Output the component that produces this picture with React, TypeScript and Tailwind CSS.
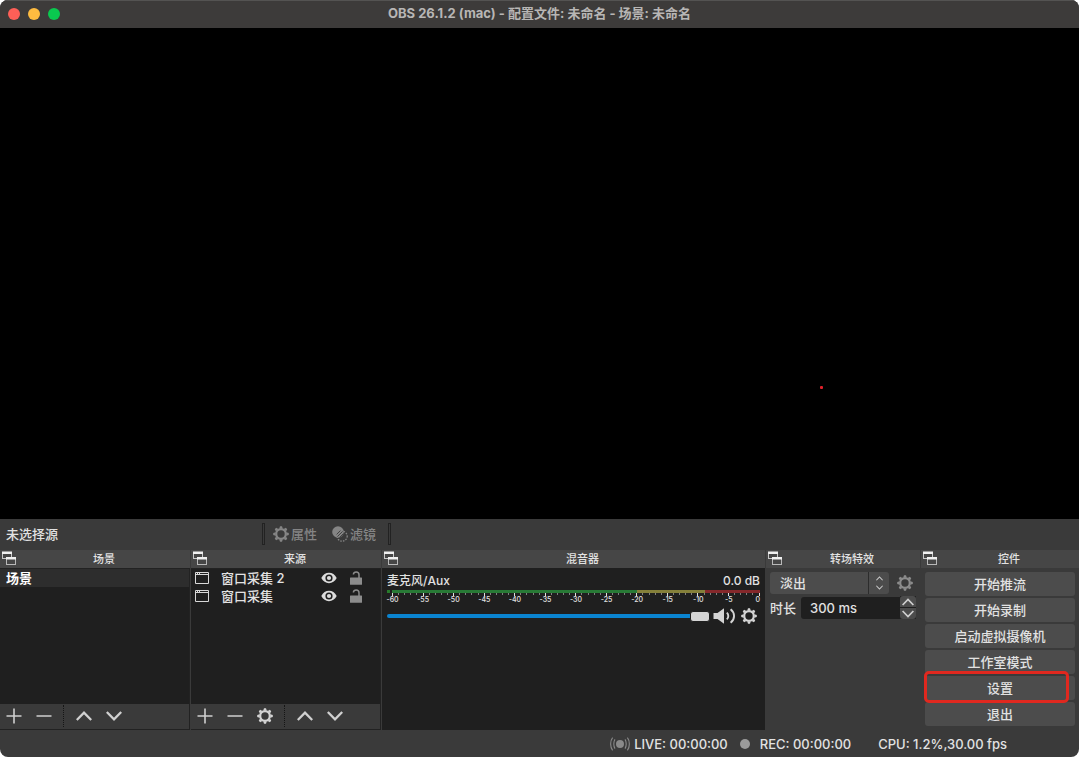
import { useState } from "react";
import type { ReactNode } from "react";
import clsx from "clsx";

const GEAR_ANGLES = [0, 45, 90, 135, 180, 225, 270, 315];

function GearIcon({ className }: { className?: string }) {
  return (
    <svg viewBox="0 0 16 16" className={clsx("size-4 shrink-0", className)} aria-hidden="true">
      <circle cx="8" cy="8" r="4.8" fill="none" stroke="currentColor" strokeWidth="2.2" />
      {GEAR_ANGLES.map((angle) => (
        <path key={angle} d="M6.3 2.6 L7 0.2 H9 L9.7 2.6 Z" fill="currentColor" transform={`rotate(${angle} 8 8)`} />
      ))}
    </svg>
  );
}

function FiltersIcon() {
  return (
    <svg viewBox="0 0 16 16" className="size-4 shrink-0" aria-hidden="true">
      <circle cx="10.2" cy="10.2" r="5" fill="none" stroke="currentColor" strokeWidth="1.3" strokeDasharray="1.5 1.2" />
      <circle cx="6" cy="6" r="5.8" fill="currentColor" />
      <path d="M4.6 8.4 L8.4 4.6 M5.4 10.6 L10.6 5.4 M7.6 11.4 L11.4 7.6" stroke="#3a3a3a" strokeWidth="0.9" />
    </svg>
  );
}

function FloatIcon() {
  return (
    <svg viewBox="0 0 16 16" className="size-4" aria-hidden="true">
      <rect x="0.5" y="1.5" width="9" height="6" fill="#464646" stroke="#c8c8c8" />
      <path d="M0 0.5 H10 V3 H0 Z" fill="#f0f0f0" />
      <rect x="4.5" y="7.5" width="9" height="6" fill="#464646" stroke="#b8b8b8" />
      <path d="M4 6 H14 V8.5 H4 Z" fill="#f0f0f0" />
    </svg>
  );
}

function WindowIcon() {
  return (
    <svg viewBox="0 0 14 12" className="h-3 w-3.5 shrink-0" aria-hidden="true">
      <path d="M0.5 0.5 H13.5 V11.5 H0.5 Z M0.5 2.5 H13.5" fill="none" stroke="#d8d8d8" />
      <path d="M2 1.5 H5" stroke="#d8d8d8" strokeDasharray="1 1" />
    </svg>
  );
}

function EyeIcon() {
  return (
    <svg viewBox="0 0 16 12" className="h-3 w-4" aria-hidden="true">
      <path
        fillRule="evenodd"
        fill="#dcdcdc"
        d="M0.3 6 C2 2.6 4.8 0.8 8 0.8 S14 2.6 15.7 6 C14 9.4 11.2 11.2 8 11.2 S2 9.4 0.3 6 Z M8 2.4 A3.6 3.6 0 1 0 8 9.6 A3.6 3.6 0 1 0 8 2.4 Z"
      />
      <circle cx="8" cy="6" r="2.1" fill="#dcdcdc" />
    </svg>
  );
}

function UnlockIcon() {
  return (
    <svg viewBox="0 0 12 14" className="h-3.5 w-3" aria-hidden="true">
      <path d="M3.4 3.6 C3.4 1.6 4.6 0.9 6.2 0.9 C8 0.9 9 2 9 3.8 V7" fill="none" stroke="#8c8c8c" strokeWidth="1.5" />
      <rect x="0" y="6.5" width="12" height="7.3" rx="0.5" fill="#8c8c8c" />
    </svg>
  );
}

function SpeakerIcon() {
  return (
    <svg viewBox="0 0 23 16" className="h-4 w-[23px]" aria-hidden="true">
      <path d="M0.5 5 H4.5 L11 0.2 V15.8 L4.5 11 H0.5 Z" fill="#d4d4d4" />
      <path d="M13.8 4.6 C15.8 6.4 15.8 9.6 13.8 11.4 M17.6 1.2 C22.2 4.8 22.2 11.2 17.6 14.8" fill="none" stroke="#d4d4d4" strokeWidth="1.9" />
    </svg>
  );
}

function LiveIcon() {
  return (
    <svg viewBox="0 0 20 14" className="h-3.5 w-5" aria-hidden="true">
      <circle cx="10" cy="7" r="4" fill="#8a8a8a" />
      <path
        d="M5 2.4 C3.4 4.6 3.4 9.4 5 11.6 M2.6 0.6 C0 3.8 0 10.2 2.6 13.4 M15 2.4 C16.6 4.6 16.6 9.4 15 11.6 M17.4 0.6 C20 3.8 20 10.2 17.4 13.4"
        fill="none"
        stroke="#8a8a8a"
        strokeWidth="1.1"
      />
    </svg>
  );
}

const GLYPHS = {
  plus: "M0.5 8 H15.5 M8 0.5 V15.5",
  minus: "M0.5 8 H15.5",
  up: "M0.8 12 L8 4.6 L15.2 12",
  down: "M0.8 4 L8 11.4 L15.2 4",
};

function Glyph({ name, className = "size-4" }: { name: keyof typeof GLYPHS; className?: string }) {
  const bold = name === "up" || name === "down";
  return (
    <svg viewBox="0 0 16 16" className={className} aria-hidden="true">
      <path d={GLYPHS[name]} fill="none" stroke="#d0d0d0" strokeWidth={bold ? 2.3 : 1.6} />
    </svg>
  );
}

function ToolButton({ label, children }: { label: string; children: ReactNode }) {
  return (
    <button type="button" aria-label={label} className="flex h-6 w-7 items-center justify-center text-[#d4d4d4]">
      {children}
    </button>
  );
}

function ListToolbar({ withSettings }: { withSettings?: boolean }) {
  return (
    <div className="flex h-[25px] items-center gap-0.5 bg-[#3a3a3a] pb-px">
      <ToolButton label="添加"><Glyph name="plus" /></ToolButton>
      <ToolButton label="移除"><Glyph name="minus" /></ToolButton>
      {withSettings && (
        <ToolButton label="属性"><GearIcon /></ToolButton>
      )}
      <div className="mr-1 ml-[3px] h-[22px] border-l border-dotted border-[#151515]" />
      <ToolButton label="上移"><Glyph name="up" /></ToolButton>
      <ToolButton label="下移"><Glyph name="down" /></ToolButton>
    </div>
  );
}

function Dock({ title, className, children }: { title: string; className?: string; children: ReactNode }) {
  return (
    <section className="flex min-w-0 flex-col">
      <header className="flex h-[18px] items-center bg-[#464646] pl-0.5">
        <button type="button" aria-label={`${title} 浮动`}><FloatIcon /></button>
        <h2 className="flex-1 text-center text-[11px] leading-4 font-medium">{title}</h2>
      </header>
      <div className={clsx("flex flex-1 flex-col", className)}>{children}</div>
    </section>
  );
}

const SOURCES = ["窗口采集 2", "窗口采集"];
const METER_LABELS = [-60, -55, -50, -45, -40, -35, -30, -25, -20, -15, -10, -5, 0];
const METER_TICKS = Array.from({ length: 61 }, (_, i) => i);

function Meter() {
  return (
    <div>
      <div className="flex h-[3px]">
        <div className="mr-0.5 w-[3px] bg-[#287a2c]" />
        <div className="grid flex-1 grid-cols-[40fr_11fr_9fr]">
          <div className="bg-[#287a36]" />
          <div className="bg-[#85803a]" />
          <div className="bg-[#85282b]" />
        </div>
      </div>
      <div className="flex h-[3px] justify-between pl-[5px]">
        {METER_TICKS.map((i) => (
          <div key={i} className={clsx("w-px", i % 5 === 0 ? "h-[3px] bg-[#e0e0e0]" : "h-0.5 bg-[#808080]")} />
        ))}
      </div>
      <div className="flex justify-between pl-[5px] text-[7px] leading-[7px]">
        {METER_LABELS.map((db) => (
          <div key={db} className={clsx("flex w-px", db === 0 ? "justify-end" : "justify-center")}>
            <span>{db}</span>
          </div>
        ))}
      </div>
    </div>
  );
}

function Mixer() {
  const [volume, setVolume] = useState(100);
  return (
    <div className="pt-1 pr-[5px] pl-[5px]">
      <div className="flex h-[18px] items-center justify-between text-xs font-medium">
        <label htmlFor="aux-volume">麦克风/Aux</label>
        <span>0.0 dB</span>
      </div>
      <Meter />
      <div className="mt-[5px] flex h-4 items-center">
        <input
          id="aux-volume"
          type="range"
          min={0}
          max={100}
          value={volume}
          onChange={(e) => setVolume(Number(e.target.value))}
          style={{ backgroundSize: `${volume}% 100%` }}
          className="h-1 min-w-0 flex-1 appearance-none rounded-sm bg-[#4a4a4a] bg-linear-to-r from-[#0a84d0] to-[#0a84d0] bg-no-repeat [&::-webkit-slider-thumb]:h-[11px] [&::-webkit-slider-thumb]:w-5 [&::-webkit-slider-thumb]:appearance-none [&::-webkit-slider-thumb]:rounded-[3px] [&::-webkit-slider-thumb]:border [&::-webkit-slider-thumb]:border-[#1f1f1f] [&::-webkit-slider-thumb]:bg-[#d4d4d4]"
        />
        <button type="button" aria-label="静音" className="ml-[3px]"><SpeakerIcon /></button>
        <button type="button" aria-label="音频设置" className="mr-[3px] ml-[5px] text-[#d4d4d4]"><GearIcon /></button>
      </div>
    </div>
  );
}

function Transitions() {
  return (
    <>
      <div className="flex items-center gap-2">
        <div className="relative flex-1">
          <select aria-label="转场特效" className="h-[22px] w-full appearance-none rounded-[3px] bg-[#4c4c4c] pl-2.5">
            <option>淡出</option>
            <option>直接切换</option>
          </select>
          <div className="pointer-events-none absolute inset-y-0 right-0 flex w-[21px] flex-col items-center justify-center gap-0.5 border-l border-[#2c2c2c]">
            <Glyph name="up" className="size-[7px]" />
            <Glyph name="down" className="size-[7px]" />
          </div>
        </div>
        <button type="button" aria-label="转场属性" className="mr-[3px] text-[#8c8c8c]"><GearIcon /></button>
      </div>
      <div className="mt-0.5 flex items-center">
        <label htmlFor="duration" className="w-[31px] shrink-0">时长</label>
        <input
          id="duration"
          type="text"
          defaultValue="300 ms"
          className="h-[22px] min-w-0 flex-1 rounded-l-[3px] bg-[#1f1f1f] pl-[9px]"
        />
        <div className="flex flex-col gap-px bg-[#1f1f1f]">
          <button type="button" aria-label="增加" className="flex h-[11px] w-4 items-center justify-center rounded-t-[3px] bg-[#4c4c4c]">
            <Glyph name="up" className="size-3" />
          </button>
          <button type="button" aria-label="减少" className="flex h-[11px] w-4 items-center justify-center rounded-b-[3px] bg-[#4c4c4c]">
            <Glyph name="down" className="size-3" />
          </button>
        </div>
      </div>
    </>
  );
}

const CONTROLS = ["开始推流", "开始录制", "启动虚拟摄像机", "工作室模式", "设置", "退出"];

export default function App() {
  return (
    <div className="flex min-h-screen flex-col overflow-hidden rounded-lg bg-[#3a3a3a] font-['Inter','Noto_Sans_CJK_SC',sans-serif] text-[13px] leading-[18px] font-medium text-[#e2e2e2]">
      <div className="relative flex h-7 items-center justify-center border-t border-[#545352] bg-[#3d3b3a] pb-[3px]">
        <div className="absolute top-[7px] left-2 flex gap-2">
          <button type="button" aria-label="关闭" className="size-3 rounded-full bg-[#ff5f57]" />
          <button type="button" aria-label="最小化" className="size-3 rounded-full bg-[#febb40]" />
          <button type="button" aria-label="全屏" className="size-3 rounded-full bg-[#0ac94f]" />
        </div>
        <h1 className="font-bold text-[#b8b6b5]">OBS 26.1.2 (mac) - 配置文件: 未命名 - 场景: 未命名</h1>
      </div>

      <main className="relative flex-1 bg-black">
        <div className="absolute top-[73%] left-[76%] size-[3px] rounded-[1px] bg-[#e0202a]" />
      </main>

      <div className="flex h-[31px] items-center pb-0.5">
        <div className="w-[262px] pl-1.5">未选择源</div>
        <div className="h-[22px] w-[3px] border border-[#222]" />
        <div className="flex gap-[15px] px-2 text-[#858585]">
          <button type="button" disabled className="flex items-center gap-0.5"><GearIcon />属性</button>
          <button type="button" disabled className="flex items-center gap-0.5"><FiltersIcon />滤镜</button>
        </div>
        <div className="ml-1 h-[22px] w-[3px] border border-[#222]" />
      </div>

      <div className="grid grid-cols-[190fr_190fr_383fr_154fr_158fr] gap-x-px">
        <Dock title="场景" className="border-y border-r border-[#222] bg-[#1f1f1f]">
          <ul className="flex-1">
            <li className="bg-[#2d2d2d] pl-1.5 font-bold text-white">场景</li>
          </ul>
          <ListToolbar />
        </Dock>

        <Dock title="来源" className="border-y border-r border-[#222] bg-[#1f1f1f]">
          <ul className="flex-1">
            {SOURCES.map((name) => (
              <li key={name} className="flex items-center pr-[18px] pl-1">
                <WindowIcon />
                <span className="ml-3 flex-1 whitespace-nowrap">{name}</span>
                <button type="button" aria-label={`显示 ${name}`}><EyeIcon /></button>
                <button type="button" aria-label={`锁定 ${name}`} className="ml-[13px]"><UnlockIcon /></button>
              </li>
            ))}
          </ul>
          <ListToolbar withSettings />
        </Dock>

        <Dock title="混音器" className="bg-[#1f1f1f]">
          <Mixer />
        </Dock>

        <Dock title="转场特效" className="px-1 pt-1">
          <Transitions />
        </Dock>

        <Dock title="控件" className="gap-0.5 p-1">
          {CONTROLS.map((label) => (
            <div key={label} className="relative">
              <button type="button" className="flex h-6 w-full items-center justify-center rounded-[3px] bg-[#4c4c4c]">
                {label}
              </button>
              {label === "设置" && (
                <div className="pointer-events-none absolute -top-[5px] right-1.5 -bottom-[3px] -left-px z-10 rounded-[5px] border-[3px] border-[#e0281f]" />
              )}
            </div>
          ))}
        </Dock>
      </div>

      <footer className="flex h-[27px] items-center justify-end pr-[72px]">
        <LiveIcon />
        <span className="ml-1">LIVE: 00:00:00</span>
        <span className="ml-3 size-2.5 rounded-full bg-[#9a9a9a]" />
        <span className="ml-2.5">REC: 00:00:00</span>
        <span className="ml-[27px]">CPU: 1.2%,30.00 fps</span>
      </footer>
    </div>
  );
}
